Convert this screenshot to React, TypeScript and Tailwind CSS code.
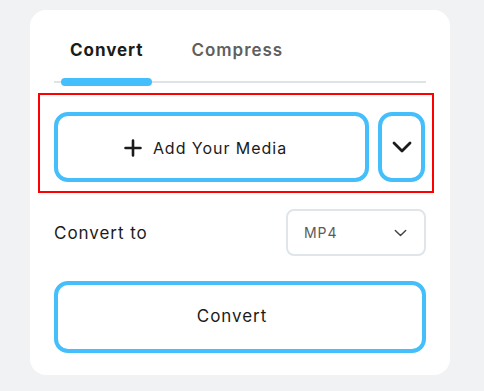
import React, { useState } from 'react';

const PlusIcon: React.FC<React.SVGProps<SVGSVGElement>> = (props) => (
    <svg xmlns="http://www.w3.org/2000/svg" fill="none" viewBox="0 0 18 18" strokeWidth={2.6} stroke="currentColor" {...props}>
        <path strokeLinecap="round" d="M9 1.5v15M1.5 9h15" />
    </svg>
);

const ChevronIcon: React.FC<React.SVGProps<SVGSVGElement>> = (props) => (
    <svg xmlns="http://www.w3.org/2000/svg" fill="none" viewBox="0 0 20 12" stroke="currentColor" {...props}>
        <path strokeLinecap="round" strokeLinejoin="round" d="M2 2l8 8 8-8" />
    </svg>
);

const App: React.FC = () => {
    const [tab, setTab] = useState<'convert' | 'compress'>('convert');

    return (
        <div className="min-h-screen bg-[#f1f2f4] pt-[10px] pl-[30px] font-['Inter',sans-serif] tracking-[0.06em] text-[#1b1b1b]">
            <div className="w-[420px] h-[365px] rounded-[16px] bg-white px-6">
                {/* tabs */}
                <div className="flex items-center pt-[28px] pl-4 text-[17px] leading-6">
                    <button
                        onClick={() => setTab('convert')}
                        className={`font-bold ${tab === 'convert' ? 'text-[#1b1b1b]' : 'text-[#5f5f5f]'}`}
                    >
                        Convert
                    </button>
                    <button
                        onClick={() => setTab('compress')}
                        className={`ml-[48px] font-semibold ${tab === 'compress' ? 'text-[#1b1b1b]' : 'text-[#5f5f5f]'}`}
                    >
                        Compress
                    </button>
                </div>
                <div className="relative mt-[19px] h-[2px] bg-[#dde4e7]">
                    <div className="absolute left-[7px] top-[-3px] h-[8px] w-[91px] rounded-full bg-[#45bffb]" />
                </div>

                {/* highlighted media row */}
                <div className="mt-[10px] ml-[-16px] mr-[-8px] border-2 border-[#ff0000] pl-[14px] pr-[7px] pt-[17px] pb-[9px]">
                    <div className="flex gap-[9px]">
                        <button className="flex h-[70px] flex-1 items-center justify-center gap-[11px] rounded-[14px] border-4 border-[#45bffb] pr-[12px] pt-[2px] text-[16px]">
                            <PlusIcon className="h-[18px] w-[18px]" />
                            <span>Add Your Media</span>
                        </button>
                        <button className="flex h-[70px] w-[47px] items-center justify-center rounded-[14px] border-4 border-[#45bffb]">
                            <ChevronIcon className="h-[12px] w-[20px]" strokeWidth={2.8} />
                        </button>
                    </div>
                </div>

                {/* convert to */}
                <div className="mt-[16px] flex items-center justify-between">
                    <span className="pt-[2px] text-[17px]">Convert to</span>
                    <button className="flex h-[47px] w-[140px] items-center justify-between rounded-[8px] border-2 border-[#dfe5e8] pl-[16px] pr-[17px] text-[14px] text-[#5a5a5a]">
                        <span>MP4</span>
                        <ChevronIcon className="h-[8px] w-[13px] text-[#444]" strokeWidth={2.2} />
                    </button>
                </div>

                <button className="mt-[25px] flex h-[72px] w-full items-center justify-center rounded-[14px] border-4 border-[#45bffb] pr-[16px] text-[17px]">
                    Convert
                </button>
            </div>
        </div>
    );
};

export default App;
